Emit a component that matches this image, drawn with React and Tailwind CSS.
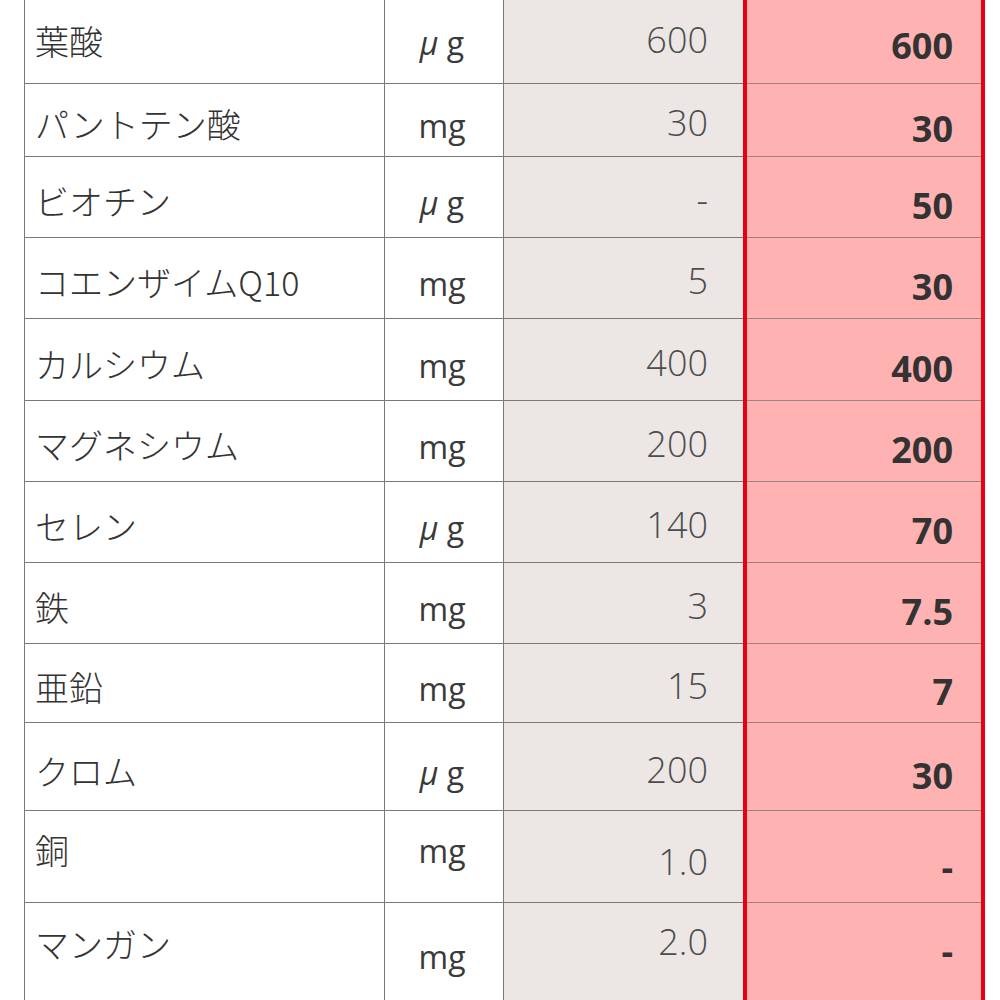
import React from 'react';

// 栄養成分の比較表（上下が切れた状態のスクリーンショット）
const rows = [
  { name: '葉酸', unit: 'μg', std: '600', ours: '600', h: 'h-[93px]' },
  { name: 'パントテン酸', unit: 'mg', std: '30', ours: '30', h: 'h-[73px]' },
  { name: 'ビオチン', unit: 'μg', std: '-', ours: '50', h: 'h-[81px]' },
  { name: 'コエンザイムQ10', unit: 'mg', std: '5', ours: '30', h: 'h-[81px]' },
  { name: 'カルシウム', unit: 'mg', std: '400', ours: '400', h: 'h-[82px]' },
  { name: 'マグネシウム', unit: 'mg', std: '200', ours: '200', h: 'h-[81px]' },
  { name: 'セレン', unit: 'μg', std: '140', ours: '70', h: 'h-[81px]' },
  { name: '鉄', unit: 'mg', std: '3', ours: '7.5', h: 'h-[81px]' },
  { name: '亜鉛', unit: 'mg', std: '15', ours: '7', h: 'h-[79px]' },
  { name: 'クロム', unit: 'μg', std: '200', ours: '30', h: 'h-[88px]' },
  {
    name: '銅', unit: 'mg', std: '1.0', ours: '-', h: 'h-[92px]',
    pad: ['pb-[13px]', 'pb-[12px]', 'pt-[11px]', 'pt-[20px]'],
  },
  {
    name: 'マンガン', unit: 'mg', std: '2.0', ours: '-', h: 'h-[110px]',
    pad: ['pb-[27px]', 'pb-[2px]', 'pb-[31px]', 'pb-[14px]'],
  },
];

const defaultPad = ['pt-[8px]', 'pt-[12px]', 'pt-[6px]', 'pt-[18px]'];

const cjk = { fontFamily: '"Noto Sans CJK JP", "Noto Sans", sans-serif' };
const latin = { fontFamily: '"Open Sans", "Noto Sans", sans-serif' };

function Unit({ value }) {
  if (value === 'μg') {
    return (
      <span>
        <span className="italic">μ</span> g
      </span>
    );
  }
  return <span>{value}</span>;
}

export default function App() {
  return (
    <div className="w-full h-[1000px] overflow-hidden bg-white">
      <div className="-mt-[9px] ml-[24px] w-[961px] border-l border-[#7d7875]">
        {rows.map((r, i) => {
          const pad = r.pad || defaultPad;
          return (
            <div key={i} className={`flex ${r.h}`}>
              <div
                className={`w-[360px] flex items-center pl-[10px] border-r border-b border-[#7d7875] text-[34px] font-light leading-none text-[#333] ${pad[0]}`}
                style={cjk}
              >
                {r.name}
              </div>
              <div
                className={`w-[119px] flex items-center justify-center pr-[4px] border-r border-b border-[#7d7875] text-[32px] leading-none text-[#3a3a3a] ${pad[1]}`}
                style={latin}
              >
                <Unit value={r.unit} />
              </div>
              <div
                className={`w-[239px] flex items-center justify-end pr-[35px] bg-[#ece7e4] border-b border-[#7d7875] text-[36px] font-light leading-none text-[#4d4d4d] ${pad[2]}`}
                style={latin}
              >
                {r.std}
              </div>
              <div className="w-[242px] border-x-4 border-[#e60012] bg-[#ffb2b2]">
                <div
                  className={`h-full flex items-center justify-end pr-[28px] border-b border-[#9a8583] text-[36px] font-bold leading-none text-[#333] ${pad[3]}`}
                  style={latin}
                >
                  {r.ours}
                </div>
              </div>
            </div>
          );
        })}
      </div>
    </div>
  );
}
